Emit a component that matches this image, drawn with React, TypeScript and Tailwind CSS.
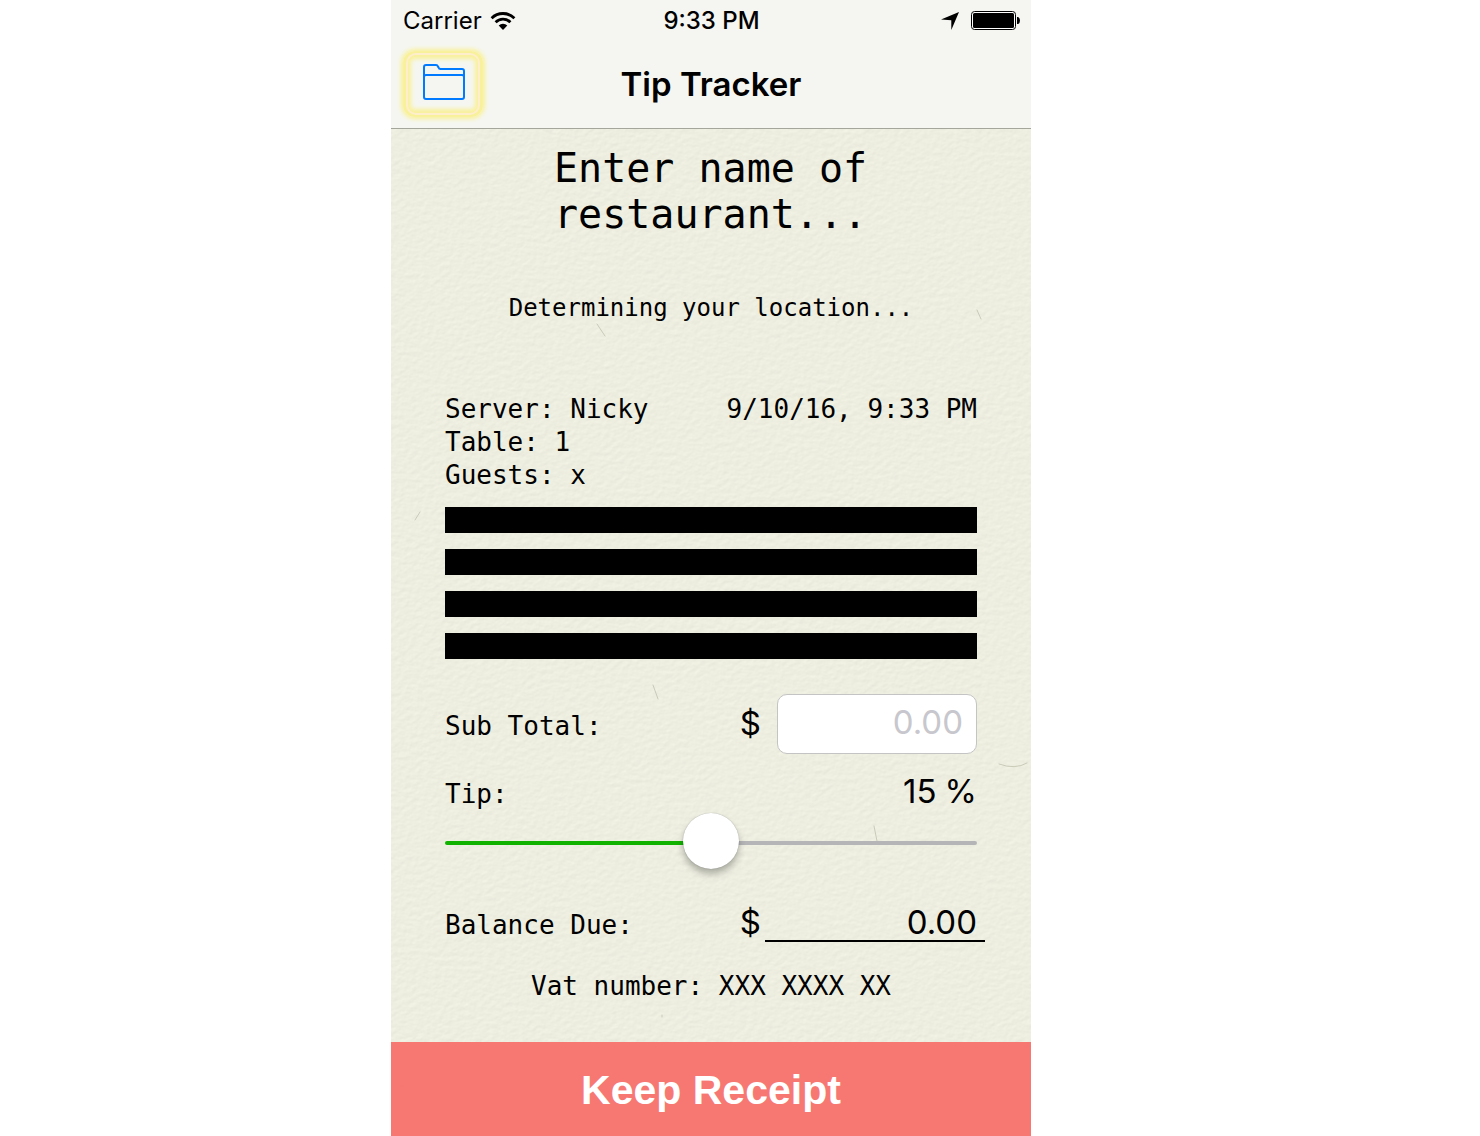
import { useState } from "react";

const BARS = [0, 1, 2, 3];

function PaperTexture() {
  return (
    <svg className="pointer-events-none absolute inset-0 h-full w-full" aria-hidden="true">
      <filter id="paper" x="0" y="0" width="100%" height="100%" colorInterpolationFilters="sRGB">
        <feTurbulence type="fractalNoise" baseFrequency="0.17 0.22" numOctaves="3" seed="7" result="n" />
        <feDiffuseLighting in="n" surfaceScale="0.1" lightingColor="#edeee0" diffuseConstant="1.155">
          <feDistantLight azimuth="60" elevation="60" />
        </feDiffuseLighting>
      </filter>
      <rect width="100%" height="100%" filter="url(#paper)" />
      <g fill="none" stroke="#c9cab8" strokeWidth="1" strokeLinecap="round">
        <path d="M258 109q10 4 14 0" />
        <path d="M262 685l5 14" />
        <path d="M608 764q16 6 28-1" />
        <path d="M483 826l3 15" />
        <path d="M206 324l8 12" />
        <path d="M586 310l4 9" />
        <path d="M24 520l5-8" />
        <path d="M271 1015v2" />
      </g>
    </svg>
  );
}

function WifiIcon() {
  return (
    <svg width="26" height="20" viewBox="0 0 26 20" aria-hidden="true">
      <g fill="none" stroke="#000" strokeWidth="2.8">
        <path d="M1.6 7.2a16.2 16.2 0 0 1 22.8 0" />
        <path d="M5.6 11.2a10.4 10.4 0 0 1 14.8 0" />
      </g>
      <path d="M13 19l-4.3-4.4a6.2 6.2 0 0 1 8.6 0z" />
    </svg>
  );
}

function ArrowIcon() {
  return (
    <svg width="18" height="18" viewBox="0 0 18 18" aria-hidden="true">
      <path d="M18 0L10.3 18V8.2L0 7.6z" />
    </svg>
  );
}

function BatteryIcon() {
  return (
    <svg width="49" height="19" viewBox="0 0 49 19" aria-hidden="true">
      <rect x="0.5" y="0.5" width="44" height="18" rx="3" fill="#fff" stroke="#000" />
      <rect x="2" y="2" width="41" height="15" rx="1.5" />
      <path d="M46 6h1.2q1.8 1 1.8 3.500t-1.800 3.500H46z" />
    </svg>
  );
}

function FolderIcon() {
  return (
    <svg width="42" height="36" viewBox="0 0 42 36" fill="none" stroke="#007aff" strokeWidth="2" aria-hidden="true">
      <path d="M1 33V3q0-2 2-2h10q1.500 0 2 1.500l.500 1q.500 1.500 2 1.500H39q2 0 2 2v26q0 2-2 2H3q-2 0-2-2z" />
      <path d="M1 13q0-2 2-2H39q2 0 2 2" />
    </svg>
  );
}

export default function App() {
  const [tip, setTip] = useState(15);
  const [subTotal, setSubTotal] = useState("");
  const balance = (Number(subTotal) || 0) * (1 + tip / 100);
  const percent = (tip / 30) * 100;

  return (
    <div className="min-h-screen bg-white font-['Inter',sans-serif] text-black lg:pr-[58px]">
      <div className="relative isolate mx-auto flex min-h-screen max-w-[640px] flex-col overflow-hidden bg-[#edeee0]">
        <div className="absolute inset-0 -z-10">
          <PaperTexture />
        </div>

        <header className="border-b border-[#a5a69b] bg-[#f5f6f1]">
          <div className="grid h-10 grid-cols-[1fr_auto_1fr] items-center pt-px pr-[11px] pl-3 text-[24px]">
            <div className="flex items-center gap-2">
              <span>Carrier</span>
              <WifiIcon />
            </div>
            <span className="font-medium">9:33 PM</span>
            <div className="flex items-center justify-end gap-3">
              <ArrowIcon />
              <BatteryIcon />
            </div>
          </div>
          <div className="grid h-22 grid-cols-[1fr_auto_1fr] items-center px-3">
            <button
              type="button"
              aria-label="Saved receipts"
              className="flex h-[66px] w-20 items-center justify-center justify-self-start rounded-xl shadow-[0_0_4px_2px_#f9f19a,inset_0_0_4px_8px_#f9f19a]"
            >
              <span className="flex h-[62px] w-[74px] items-center justify-center rounded-[10px] border-2 border-[#ffeecb] pb-1 pl-[2px]">
                <FolderIcon />
              </span>
            </button>
            <h1 className="pt-[2px] text-[33px] font-semibold">Tip Tracker</h1>
          </div>
        </header>

        <main className="flex flex-1 flex-col px-[54px] pt-4 font-['DejaVu_Sans_Mono',monospace] text-[26px] leading-[33px]">
          <h2 className="mx-auto w-[314px] text-[40px] leading-[46px]">Enter name of restaurant...</h2>
          <p className="mt-[55px] text-center text-[24px]">Determining your location...</p>

          <div className="mt-[68px] flex justify-between">
            <p>
              Server: Nicky
              <br />
              Table: 1
              <br />
              Guests: x
            </p>
            <time>9/10/16, 9:33 PM</time>
          </div>

          <div className="mt-[15px] flex flex-col gap-4">
            {BARS.map((bar) => (
              <div key={bar} className="h-[26px] bg-black" />
            ))}
          </div>

          <div className="mt-[35px] flex items-center">
            <label htmlFor="subtotal" className="flex-1 pt-1">
              Sub Total:
            </label>
            <span className="mr-4 pb-[2px] font-['Inter',sans-serif] text-[33px]">$</span>
            <input
              id="subtotal"
              inputMode="decimal"
              placeholder="0.00"
              value={subTotal}
              onChange={(e) => setSubTotal(e.target.value)}
              className="h-15 w-[200px] rounded-[10px] border border-[#c4c4c4] bg-white px-[13px] pb-1 text-right font-['Inter',sans-serif] text-[33px] outline-none placeholder:text-[#c7c7cd]"
            />
          </div>

          <div className="mt-5 flex items-center justify-between">
            <label htmlFor="tip" className="pt-1">
              Tip:
            </label>
            <output htmlFor="tip" className="flex gap-2 pb-[2px] font-['Inter',sans-serif] text-[33px]">
              <span>{tip}</span>
              <span>%</span>
            </output>
          </div>

          <input
            id="tip"
            type="range"
            min={0}
            max={30}
            value={tip}
            onChange={(e) => setTip(Number(e.target.value))}
            style={{ backgroundImage: `linear-gradient(to right, #12b200 ${percent}%, #b5b5b7 ${percent}%)` }}
            className="mt-[30px] h-1 w-full appearance-none rounded-full outline-none [&::-webkit-slider-thumb]:-mt-1 [&::-webkit-slider-thumb]:size-14 [&::-webkit-slider-thumb]:appearance-none [&::-webkit-slider-thumb]:rounded-full [&::-webkit-slider-thumb]:bg-white [&::-webkit-slider-thumb]:shadow-[0_0_1px_rgba(0,0,0,0.35),0_5px_7px_rgba(0,0,0,0.28)]"
          />

          <div className="-mr-2 mt-[61px] flex items-end">
            <span className="flex-1">Balance Due:</span>
            <span className="mr-1 mb-[3px] font-['Inter',sans-serif] text-[33px]">$</span>
            <output className="w-[220px] border-b-2 border-black pr-2 pb-px text-right font-['Inter',sans-serif] text-[33px]">
              {balance.toFixed(2)}
            </output>
          </div>

          <p className="mt-[28px] text-center">Vat number: XXX XXXX XX</p>
        </main>

        <button
          type="button"
          className="h-[94px] w-full bg-[#f76c68]/92 pt-1 font-['Liberation_Sans',sans-serif] text-[41px] font-bold text-white"
        >
          Keep Receipt
        </button>
      </div>
    </div>
  );
}
